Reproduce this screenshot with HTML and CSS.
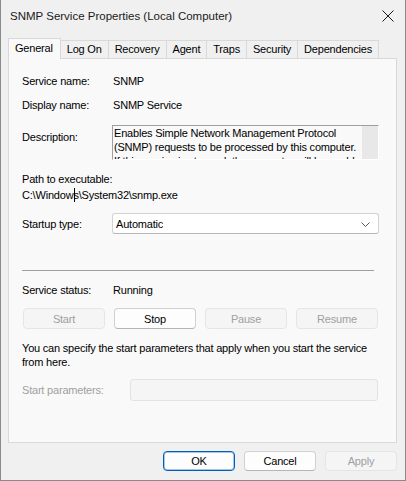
FILE: index.html
```html
<!DOCTYPE html>
<html>
<head>
<meta charset="utf-8">
<link rel="stylesheet" href="styles.css">
</head>
<body>
<div class="window">
  <div class="titlebar">
    <span class="title">SNMP Service Properties (Local Computer)</span>
    <svg class="close" width="12" height="12" viewBox="0 0 12 12"><path d="M0.5 0.5 L11.5 11.5 M11.5 0.5 L0.5 11.5" stroke="#1a1a1a" stroke-width="1" fill="none"/></svg>
  </div>
  <div class="tabs">
    <div class="tab active">General</div>
    <div class="tab">Log On</div>
    <div class="tab">Recovery</div>
    <div class="tab">Agent</div>
    <div class="tab">Traps</div>
    <div class="tab">Security</div>
    <div class="tab">Dependencies</div>
  </div>
  <div class="panel">
    <div class="row r-name"><span class="label">Service name:</span><span class="value">SNMP</span></div>
    <div class="row r-display"><span class="label">Display name:</span><span class="value">SNMP Service</span></div>
    <div class="row r-desc">
      <span class="label desc-label">Description:</span>
      <div class="descbox">
        <div class="desctext">Enables Simple Network Management Protocol (SNMP) requests to be processed by this computer. If this service is stopped, the computer will be unable to process SNMP requests.</div>
        <div class="scroll"></div>
      </div>
    </div>
    <div class="path-label">Path to executable:</div>
    <div class="path-value">C:\Windows\System32\snmp.exe<span class="ibeam"></span></div>
    <div class="row r-startup">
      <span class="label">Startup type:</span>
      <div class="combo"><span>Automatic</span>
        <svg class="chev" width="9" height="5" viewBox="0 0 9 5"><path d="M0.5 0.5 L4.5 4.5 L8.5 0.5" stroke="#555" stroke-width="1" fill="none"/></svg>
      </div>
    </div>
    <div class="sep"></div>
    <div class="row r-status"><span class="label">Service status:</span><span class="value">Running</span></div>
    <div class="svcbtns">
      <button class="btn disabled">Start</button>
      <button class="btn">Stop</button>
      <button class="btn disabled">Pause</button>
      <button class="btn disabled">Resume</button>
    </div>
    <div class="note">You can specify the start parameters that apply when you start the service from here.</div>
    <div class="row r-params">
      <span class="label params-label">Start parameters:</span>
      <div class="params-input"></div>
    </div>
  </div>
  <div class="footer">
    <button class="btn fbtn default">OK</button>
    <button class="btn fbtn">Cancel</button>
    <button class="btn fbtn disabled">Apply</button>
  </div>
</div>
</body>
</html>
```
FILE: styles.css
```css
* { box-sizing: border-box; }
html, body { margin: 0; padding: 0; }
body {
  font-family: "Liberation Sans", Arial, sans-serif;
  font-size: 11px;
  letter-spacing: -0.2px;
  color: #000;
}
.window {
  width: 406px;
  height: 481px;
  background: #f0f0f0;
  border-left: 1px solid #8a8a8a;
  border-right: 1px solid #8a8a8a;
  border-bottom: 1px solid #8a8a8a;
  display: flex;
  flex-direction: column;
}
.titlebar {
  height: 30px;
  display: flex;
  align-items: center;
  justify-content: space-between;
  padding: 1px 11px 0 9px;
}
.title { color: #1a1a1a; font-size: 11.5px; letter-spacing: 0; }

.tabs {
  height: 28px;
  display: flex;
  align-items: flex-end;
  padding-left: 7px;
}
.tab {
  height: 18px;
  line-height: 17px;
  padding: 0 6px;
  border: 1px solid #d9d9d9;
  border-bottom: none;
  border-left: none;
  background: #f0f0f0;
  white-space: nowrap;
}
.tab.active {
  height: 21px;
  line-height: 18px;
  border-left: 1px solid #d9d9d9;
  background: #f9f9f9;
  margin-bottom: -1px;
  position: relative;
  z-index: 1;
  padding: 0 7px 0 6px;
}
.panel {
  margin: 0 8px 0 7px;
  height: 385px;
  border: 1px solid #d9d9d9;
  background: #f9f9f9;
  padding: 0 13px;
  display: flex;
  flex-direction: column;
}
.row { display: flex; align-items: flex-start; line-height: 14px; }
.label { width: 91px; flex: none; }
.r-name { margin-top: 15px; }
.r-display { margin-top: 10px; }
.r-desc { margin-top: 13px; height: 35px; }
.desc-label { width: 90px; padding-top: 5px; }
.descbox {
  width: 267px;
  height: 35px;
  border-top: 1px solid #a0a0a0;
  border-left: 1px solid #a0a0a0;
  border-right: 1px solid #fff;
  border-bottom: 1px solid #fff;
  display: flex;
  overflow: hidden;
  background: #f9f9f9;
}
.desctext {
  flex: 1;
  padding: 0 0 0 1px;
  line-height: 14px;
  overflow: hidden;
}
.scroll { width: 16px; flex: none; background: #e8e8e8; }
.path-label { margin-top: 11px; line-height: 16px; }
.path-value { line-height: 16px; position: relative; }
.ibeam {
  position: absolute;
  left: 52px;
  top: 1px;
  width: 1px;
  height: 14px;
  background: #000;
}
.r-startup { margin-top: 10px; align-items: center; height: 21px; }
.combo {
  width: 267px;
  height: 21px;
  margin-left: -1px;
  background: #fff;
  border: 1px solid #d3d3d3;
  border-bottom-color: #b8b8b8;
  border-radius: 3px;
  display: flex;
  align-items: center;
  justify-content: space-between;
  padding: 0 8px 0 3px;
}
.chev { margin-top: 1px; }
.sep {
  margin-top: 36px;
  width: 352px;
  height: 1px;
  background: #a0a0a0;
}
.r-status { margin-top: 12px; }
.svcbtns {
  margin-top: 11px;
  margin-left: 1px;
  width: 355px;
  display: grid;
  grid-template-columns: repeat(4, 1fr);
  gap: 9px;
}
.btn {
  font-family: inherit;
  font-size: 11px;
  letter-spacing: -0.2px;
  height: 21px;
  padding: 0;
  background: #fdfdfd;
  color: #000;
  border: 1px solid #d0d0d0;
  border-bottom-color: #b5b5b5;
  border-radius: 4px;
  line-height: 18px;
}
.btn.disabled {
  background: #f5f5f5;
  color: #a0a0a0;
  border-color: #e5e5e5;
}
.note { margin-top: 12px; line-height: 14px; }
.r-params { margin-top: 10px; align-items: center; height: 22px; }
.params-label { width: 108px; color: #a0a0a0; }
.params-input {
  width: 248px;
  height: 22px;
  background: #f5f5f5;
  border: 1px solid #e3e3e3;
  border-radius: 3px;
}
.footer {
  display: flex;
  justify-content: flex-end;
  gap: 9px;
  padding: 8px 8px 0 0;
}
.fbtn { width: 72px; height: 20px; line-height: 17px; }
.fbtn.default {
  border: 1px solid #005fb8;
  box-shadow: inset 0 0 0 1px rgba(0, 95, 184, 0.35);
}
```
